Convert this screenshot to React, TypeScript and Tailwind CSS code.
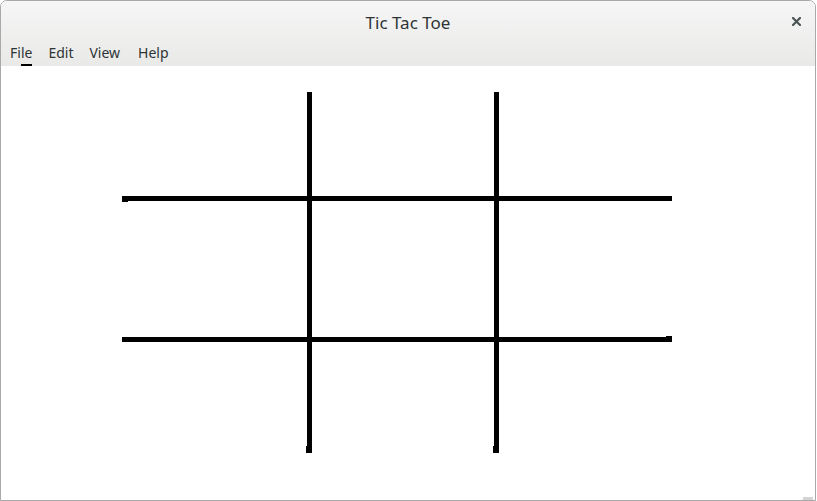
import React from 'react';

const menus = ['File', 'Edit', 'View', 'Help'];

// board lines in content coordinates (content starts at x=1, y=66)
const lines = [
  { x: 306, y: 26, w: 5, h: 361 },
  { x: 493, y: 26, w: 5, h: 361 },
  { x: 121, y: 130, w: 550, h: 5 },
  { x: 121, y: 271, w: 550, h: 5 },
  // little steps at the line ends
  { x: 121, y: 135, w: 6, h: 1 },
  { x: 665, y: 270, w: 6, h: 1 },
  { x: 305, y: 380, w: 1, h: 7 },
  { x: 492, y: 380, w: 1, h: 7 },
];

const App: React.FC = () => {
  return (
    <div
      className="w-[817px] h-[501px] bg-white"
      style={{ fontFamily: '"Noto Sans", "DejaVu Sans", sans-serif' }}
    >
      <div className="flex flex-col w-[816px] h-[501px] border border-[#a9a9a9] rounded-t-[7px] overflow-hidden">
        <div className="bg-gradient-to-b from-[#f6f6f6] to-[#e9e9e8]">
          <div className="relative flex items-center justify-center h-[40px] pt-[3px]">
            <span className="text-[17px] text-[#2e3436] leading-none">Tic Tac Toe</span>
            <svg className="absolute right-[14px] top-[16px]" width="9" height="9" viewBox="0 0 9 9">
              <path d="M1 1 L8 8 M8 1 L1 8" stroke="#4c5456" strokeWidth="2.2" strokeLinecap="square" />
            </svg>
          </div>
          <div className="flex items-start h-[25px] pt-[5px] pl-[9px] gap-[16px] text-[14px] text-[#2e3436]">
            {menus.map((m, i) => (
              <span key={m} className={`relative leading-none ${i === 3 ? 'ml-[2px]' : ''}`}>
                {m}
                {i === 0 && (
                  <span className="absolute left-[11px] top-[18px] w-[11px] h-[2px] bg-black" />
                )}
              </span>
            ))}
          </div>
        </div>
        <div className="relative flex-1 bg-white">
          <svg width="815" height="434" className="block">
            {lines.map((l, i) => (
              <rect key={i} x={l.x} y={l.y} width={l.w} height={l.h} fill="#000" />
            ))}
          </svg>
          <div className="absolute right-[2px] bottom-0 w-[10px] h-[3px] bg-[#d4d4d4]" />
        </div>
      </div>
    </div>
  );
};

export default App;
